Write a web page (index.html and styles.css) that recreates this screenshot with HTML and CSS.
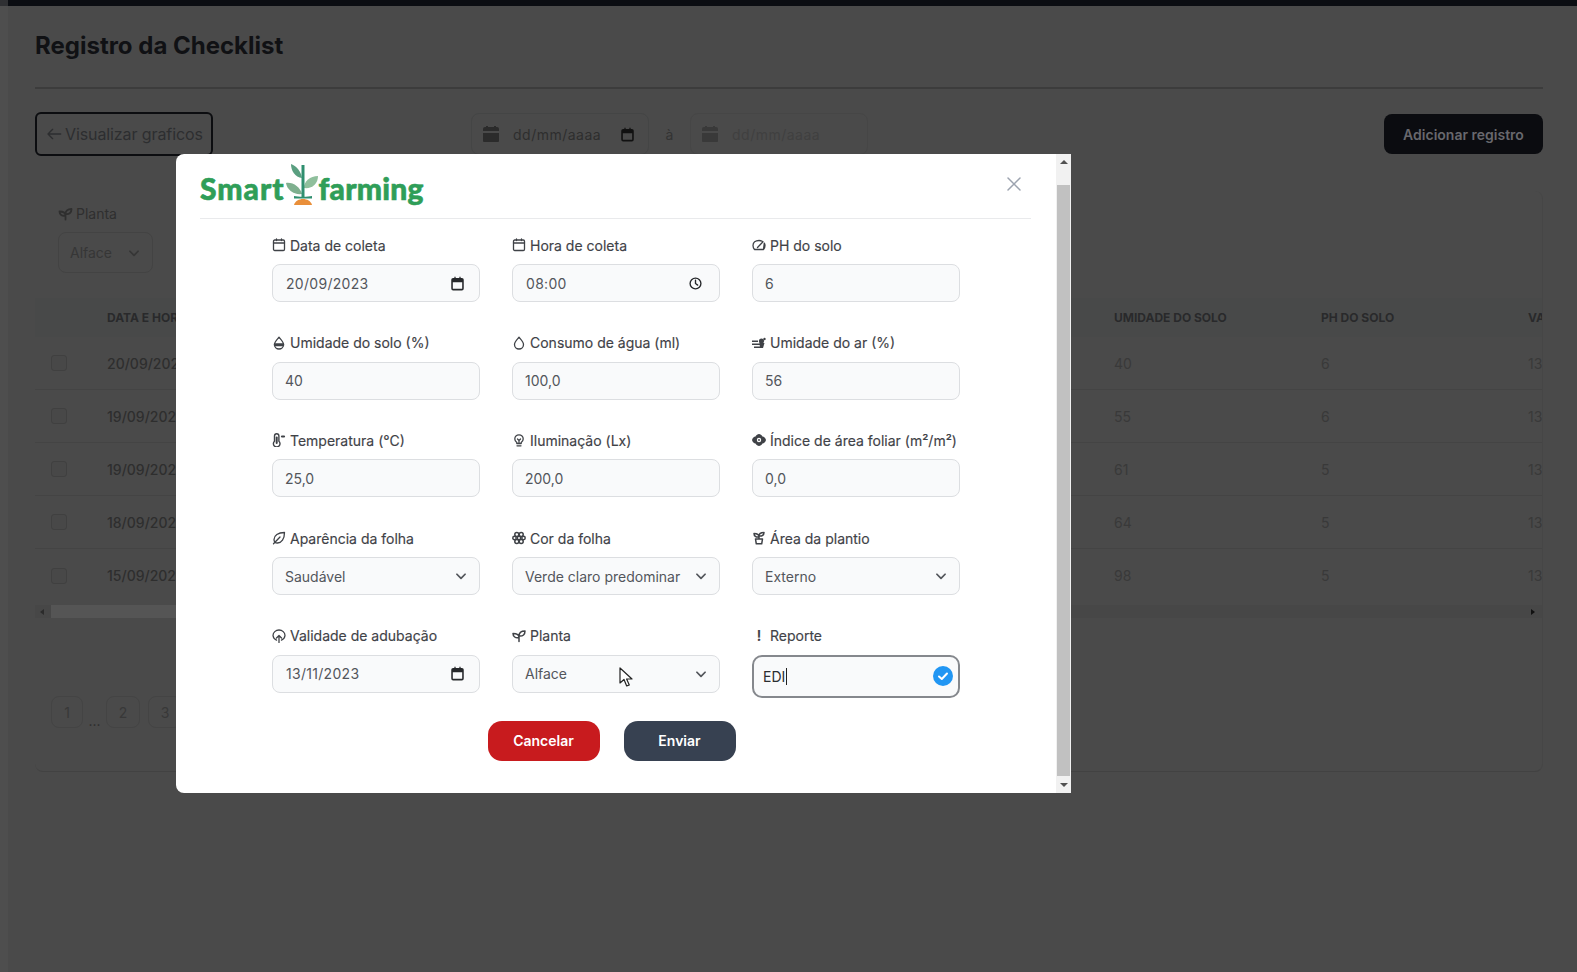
FILE: index.html
```html
<!DOCTYPE html>
<html lang="pt-BR">

<head>
    <meta charset="UTF-8">
    <meta name="viewport" content="width=device-width, initial-scale=1.0">
    <title>Registro da Checklist</title>
    <link rel="stylesheet" href="styles.css">
</head>

<body>
    <div class="rail"></div>

    <main class="page">
        <div class="topbar"></div>

        <h1 class="page-title">Registro da Checklist</h1>

        <div class="toolbar">
            <button class="btn-back" type="button">
                <svg width="16" height="16" viewBox="0 0 24 24" fill="none" stroke="currentColor" stroke-width="2" stroke-linecap="round" stroke-linejoin="round"><path d="M22 12H3M10 5l-7 7 7 7"/></svg>
                Visualizar graficos
            </button>

            <div class="date-range">
                <div class="date-box">
                    <svg class="date-cal" width="18" height="18" viewBox="0 0 18 18" fill="currentColor"><path d="M1 4a2 2 0 0 1 2-2h1V1h2v1h6V1h2v1h1a2 2 0 0 1 2 2v2H1zM1 8h16v8a1 1 0 0 1-1 1H2a1 1 0 0 1-1-1z"/></svg>
                    <span>dd/mm/aaaa</span>
                    <svg class="date-end" width="15" height="15" viewBox="0 0 24 24"><path fill-rule="evenodd" d="M5 3h2V1h2v2h6V1h2v2h2a3 3 0 0 1 3 3v14a3 3 0 0 1-3 3H5a3 3 0 0 1-3-3V6a3 3 0 0 1 3-3zm-.500 7v10a.5.5 0 0 0 .5.500h14a.5.5 0 0 0 .5-.5V10z"/></svg>
                </div>
                <span class="date-sep">à</span>
                <div class="date-box date-box-off">
                    <svg class="date-cal" width="18" height="18" viewBox="0 0 18 18" fill="currentColor"><path d="M1 4a2 2 0 0 1 2-2h1V1h2v1h6V1h2v1h1a2 2 0 0 1 2 2v2H1zM1 8h16v8a1 1 0 0 1-1 1H2a1 1 0 0 1-1-1z"/></svg>
                    <span>dd/mm/aaaa</span>
                </div>
            </div>

            <button class="btn-add" type="button">Adicionar registro</button>
        </div>

        <section class="card">
            <div class="filter">
                <div class="filter-label">
                    <svg width="15" height="14" viewBox="0 0 14 14" fill="none" stroke="currentColor" stroke-width="1.800" stroke-linecap="round" stroke-linejoin="round"><path d="M7 12.500V7M7 7c0-3 2-5 6-5 0 3.500-2 5.500-6 5zM7 8.500C7 6.500 5 4.500 1 4.500c0 3 2.500 5 6 4z"/></svg>
                    Planta
                </div>
                <div class="filter-select">
                    Alface
                    <svg width="14" height="14" viewBox="0 0 24 24" fill="none" stroke="currentColor" stroke-width="3" stroke-linecap="round" stroke-linejoin="round"><path d="M5 9l7 7 7-7"/></svg>
                </div>
            </div>

            <div class="table">
                <div class="row row-head">
                    <span></span>
                    <span>DATA E HORA</span>
                    <span>UMIDADE DO SOLO</span>
                    <span>PH DO SOLO</span>
                    <span>VALOR</span>
                </div>
                <div class="row">
                    <span class="check"></span>
                    <span class="cell-date">20/09/2023</span>
                    <span>40</span>
                    <span>6</span>
                    <span>13</span>
                </div>
                <div class="row">
                    <span class="check"></span>
                    <span class="cell-date">19/09/2023</span>
                    <span>55</span>
                    <span>6</span>
                    <span>13</span>
                </div>
                <div class="row">
                    <span class="check"></span>
                    <span class="cell-date">19/09/2023</span>
                    <span>61</span>
                    <span>5</span>
                    <span>13</span>
                </div>
                <div class="row">
                    <span class="check"></span>
                    <span class="cell-date">18/09/2023</span>
                    <span>64</span>
                    <span>5</span>
                    <span>13</span>
                </div>
                <div class="row row-last">
                    <span class="check"></span>
                    <span class="cell-date">15/09/2023</span>
                    <span>98</span>
                    <span>5</span>
                    <span>13</span>
                </div>
            </div>

            <div class="hscroll">
                <i class="arrow-left"></i>
                <div class="hscroll-thumb"></div>
                <i class="arrow-right"></i>
            </div>

            <div class="pager">
                <span class="page-btn page-btn-first">1</span>
                <span class="page-dots">...</span>
                <span class="page-btn">2</span>
                <span class="page-btn">3</span>
            </div>
        </section>
    </main>

    <div class="modal">
        <div class="modal-body">
            <header class="modal-head">
                <div class="logo">
                    <span class="logo-text">Smart</span>
                    <svg class="logo-plant" width="36" height="43" viewBox="0 0 36 43">
                        <path d="M17 31C15 24 8 19 1 20c1 7 8 12 16 11z" fill="#7fb08f"/>
                        <path d="M19 25c0-7 6-12 14-12 0 8-6 13-14 12z" fill="#8fbf9c"/>
                        <path d="M17 15C16 9 12 3 6 1c0 7 4 13 11 14z" fill="#5a9f80"/>
                        <path d="M16.500 2h3v32h-3z" fill="#2f8f6f"/>
                        <path d="M9 33c4 1 14 1 18 0v2.500H9z" fill="#2f8f6f"/>
                        <path d="M9 42c1-4 5-6 9-6s8 2 9 6z" fill="#e98f3a"/>
                    </svg>
                    <span class="logo-text logo-text-end">farming</span>
                </div>
                <svg class="modal-close" width="14" height="14" viewBox="0 0 14 14" fill="none" stroke="currentColor" stroke-width="1.500" stroke-linecap="round"><path d="M1 1l12 12M13 1L1 13"/></svg>
            </header>

            <form class="form-grid">
                <div class="form-item">
                    <label class="form-label">
                        <svg class="ico" viewBox="0 0 14 14"><rect x="1.500" y="2" width="11" height="10.500" rx="1.200"/><path d="M1.500 5h11M4.500 1v1.500M9.500 1v1.500"/></svg>
                        Data de coleta
                    </label>
                    <div class="field field-date">
                        <span>20/09/2023</span>
                        <svg class="ico-cal" viewBox="0 0 24 24"><path fill-rule="evenodd" d="M5 3h2V1h2v2h6V1h2v2h2a3 3 0 0 1 3 3v14a3 3 0 0 1-3 3H5a3 3 0 0 1-3-3V6a3 3 0 0 1 3-3zm-.500 7v10a.5.5 0 0 0 .5.500h14a.5.5 0 0 0 .5-.5V10z"/></svg>
                    </div>
                </div>
                <div class="form-item">
                    <label class="form-label">
                        <svg class="ico" viewBox="0 0 14 14"><rect x="1.500" y="2" width="11" height="10.500" rx="1.200"/><path d="M1.500 5h11M4.500 1v1.500M9.500 1v1.500"/></svg>
                        Hora de coleta
                    </label>
                    <div class="field field-date">
                        <span>08:00</span>
                        <svg class="ico-clock" viewBox="0 0 24 24"><circle cx="12" cy="12" r="10"/><path d="M12 6v6l4 3"/></svg>
                    </div>
                </div>
                <div class="form-item">
                    <label class="form-label">
                        <svg class="ico" viewBox="0 0 14 14"><path d="M2.500 11.500A6 6 0 0 1 1 7.500C1 4.500 3.500 2.500 7 2.500c1.200 0 2.300.3 3.200.8M12.300 5.200c.5.700.7 1.500.7 2.300 0 1.500-.5 3-1.500 4zM2.500 11.500h9M5.500 9.500L11 3.800"/></svg>
                        PH do solo
                    </label>
                    <div class="field"><span>6</span></div>
                </div>

                <div class="form-item">
                    <label class="form-label">
                        <svg class="ico" viewBox="0 0 14 14"><path d="M7 1.200C5 3.500 2.500 5.700 2.500 8.500a4.500 4.500 0 0 0 9 0C11.500 5.700 9 3.500 7 1.200z"/><path d="M2.500 8h9v1.500h-9z" fill="currentColor"/></svg>
                        Umidade do solo (%)
                    </label>
                    <div class="field"><span>40</span></div>
                </div>
                <div class="form-item">
                    <label class="form-label">
                        <svg class="ico" viewBox="0 0 14 14"><path d="M7 1.200C5 3.500 2.500 5.700 2.500 8.500a4.500 4.500 0 0 0 9 0C11.500 5.700 9 3.500 7 1.200z"/></svg>
                        Consumo de água (ml)
                    </label>
                    <div class="field"><span>100,0</span></div>
                </div>
                <div class="form-item">
                    <label class="form-label">
                        <svg class="ico ico-fill" viewBox="0 0 14 14"><path d="M0 4.500h6v1.500H0zM0 7.500h8V9H0zM2 10.500h6V12H2z"/><circle cx="9.500" cy="5" r="2.600"/><path d="M7.500 7h5l-1.500 5H8z"/><circle cx="12.500" cy="3" r="1.200"/></svg>
                        Umidade do ar (%)
                    </label>
                    <div class="field"><span>56</span></div>
                </div>

                <div class="form-item">
                    <label class="form-label">
                        <svg class="ico" viewBox="0 0 14 14"><path d="M2.500 3a2.200 2.200 0 0 1 4.400 0v5.200a3.300 3.300 0 1 1-4.400 0z" stroke-width="1.400"/><path d="M4.700 4.500v5.500" stroke-width="2"/><path d="M10 3.500h2" stroke-width="2.200"/></svg>
                        Temperatura (°C)
                    </label>
                    <div class="field"><span>25,0</span></div>
                </div>
                <div class="form-item">
                    <label class="form-label">
                        <svg class="ico" viewBox="0 0 14 14"><path d="M4.800 9.500C3.600 8.600 2.800 7.400 2.800 6a4.200 4.200 0 0 1 8.400 0c0 1.400-.8 2.600-2 3.500v1H4.800zM5 12.800h4M5.500 6L7 7.500 8.500 6M7 7.500v3"/></svg>
                        Iluminação (Lx)
                    </label>
                    <div class="field"><span>200,0</span></div>
                </div>
                <div class="form-item">
                    <label class="form-label">
                        <svg class="ico ico-fill" viewBox="0 0 14 14"><path d="M0 7c.6-2.200 2-3.400 3.500-3.500C4.200 2 5.800 1 7 1s2.800 1 3.500 2.500C12 3.600 13.400 4.800 14 7c-.6 2.200-2 3.400-3.500 3.500C9.800 12 8.200 13 7 13s-2.800-1-3.500-2.500C2 10.400.6 9.200 0 7z"/><circle cx="7" cy="7" r="2.200" fill="#fff"/><circle cx="7" cy="7" r=".9"/></svg>
                        Índice de área foliar (m²/m²)
                    </label>
                    <div class="field"><span>0,0</span></div>
                </div>

                <div class="form-item">
                    <label class="form-label">
                        <svg class="ico" viewBox="0 0 14 14"><path d="M12.500 1.500C6 1.500 2 4.500 2 8.500c0 2.200 1.500 3.500 3.500 3.500 4 0 7-4 7-10.500zM1.500 12.800L8 6"/></svg>
                        Aparência da folha
                    </label>
                    <div class="field field-select">
                        <span>Saudável</span>
                        <svg class="ico-chevron" viewBox="0 0 24 24"><path d="M5 9l7 7 7-7"/></svg>
                    </div>
                </div>
                <div class="form-item">
                    <label class="form-label">
                        <svg class="ico ico-thick" viewBox="0 0 14 14"><circle cx="7" cy="7" r="1.700"/><circle cx="4.800" cy="3.600" r="2"/><circle cx="9.200" cy="3.600" r="2"/><circle cx="4.800" cy="10.400" r="2"/><circle cx="9.200" cy="10.400" r="2"/><circle cx="2.500" cy="7" r="1.700"/><circle cx="11.500" cy="7" r="1.700"/></svg>
                        Cor da folha
                    </label>
                    <div class="field field-select">
                        <span>Verde claro predominar</span>
                        <svg class="ico-chevron" viewBox="0 0 24 24"><path d="M5 9l7 7 7-7"/></svg>
                    </div>
                </div>
                <div class="form-item">
                    <label class="form-label">
                        <svg class="ico ico-thick" viewBox="0 0 14 14"><path d="M3.500 8h7l-.8 4.800H4.300zM7 8V4.500M7 5C7 3 8.500 1.500 12 1.500 12 4 10 5.500 7 5zM7 6C7 4 5.500 2.500 2 2.500 2 5 4 6.500 7 6z"/></svg>
                        Área da plantio
                    </label>
                    <div class="field field-select">
                        <span>Externo</span>
                        <svg class="ico-chevron" viewBox="0 0 24 24"><path d="M5 9l7 7 7-7"/></svg>
                    </div>
                </div>

                <div class="form-item">
                    <label class="form-label">
                        <svg class="ico" viewBox="0 0 14 14"><path d="M4.500 11.200A5.800 5.800 0 0 1 1 6.500a6 5.500 0 0 1 12 0 5.800 5.800 0 0 1-3.500 4.700M7 13.500V6.500M4.500 9L7 6.500 9.500 9"/></svg>
                        Validade de adubação
                    </label>
                    <div class="field field-date">
                        <span>13/11/2023</span>
                        <svg class="ico-cal" viewBox="0 0 24 24"><path fill-rule="evenodd" d="M5 3h2V1h2v2h6V1h2v2h2a3 3 0 0 1 3 3v14a3 3 0 0 1-3 3H5a3 3 0 0 1-3-3V6a3 3 0 0 1 3-3zm-.500 7v10a.5.5 0 0 0 .5.500h14a.5.5 0 0 0 .5-.5V10z"/></svg>
                    </div>
                </div>
                <div class="form-item">
                    <label class="form-label">
                        <svg class="ico ico-thick" viewBox="0 0 14 14"><path d="M7 12.500V7M7 7c0-3 2-5 6-5 0 3.500-2 5.500-6 5zM7 8.500C7 6.500 5 4.500 1 4.500c0 3 2.500 5 6 4z"/></svg>
                        Planta
                    </label>
                    <div class="field field-select">
                        <span>Alface</span>
                        <svg class="ico-chevron" viewBox="0 0 24 24"><path d="M5 9l7 7 7-7"/></svg>
                    </div>
                </div>
                <div class="form-item">
                    <label class="form-label">
                        <span class="ico-bang">!</span>
                        Reporte
                    </label>
                    <div class="field field-focus">
                        <span>EDI</span><i class="caret"></i>
                        <svg class="ico-ok" viewBox="0 0 20 20"><circle cx="10" cy="10" r="10" fill="#2196f3"/><path d="M6 10.500l2.800 2.500L14 7.500" fill="none" stroke="#fff" stroke-width="2" stroke-linecap="round" stroke-linejoin="round"/></svg>
                    </div>
                </div>
            </form>

            <div class="form-actions">
                <button class="btn btn-cancel" type="button">Cancelar</button>
                <button class="btn btn-send" type="button">Enviar</button>
            </div>
        </div>

        <div class="vscroll">
            <i class="arrow-up"></i>
            <div class="vscroll-thumb"></div>
            <i class="arrow-down"></i>
        </div>
    </div>

    <svg class="mouse" width="14" height="21" viewBox="0 0 14 21"><path d="M1 1v15l4-3.500 2.700 6.500 2.600-1.100L7.600 12H13z" fill="#fff" stroke="#222" stroke-width="1.200" stroke-linejoin="round"/></svg>
</body>

</html>
```

FILE: styles.css
```css
* {
    box-sizing: border-box;
}

html,
body {
    height: 100%;
}

body {
    margin: 0;
    display: flex;
    overflow: hidden;
    font-family: Inter, "Liberation Sans", sans-serif;
    background-color: #4a4a4a;
    color: #2b2b2b;
}

button {
    font-family: inherit;
    cursor: pointer;
}

/* pagina escurecida atras do modal */
.rail {
    width: 8px;
    flex-shrink: 0;
    background-color: #4e4e4e;
    border-top: 6px solid #2f3033;
}

.page {
    flex: 1;
    min-width: 0;
    padding-right: 34px;
}

.topbar {
    height: 6px;
    margin-right: -34px;
    background-color: #0b0d12;
}

.page-title {
    margin: 0 0 0 27px;
    padding: 25px 0 26px;
    font-size: 24px;
    line-height: 30px;
    font-weight: 700;
    color: #101114;
    border-bottom: 2px solid #3c3c3c;
}

.toolbar {
    display: flex;
    align-items: center;
    margin: 23px 0 0 27px;
    height: 44px;
}

.btn-back {
    display: flex;
    align-items: center;
    gap: 3px;
    width: 178px;
    height: 44px;
    padding: 0 9px;
    font-size: 16px;
    letter-spacing: -0.1px;
    white-space: nowrap;
    color: #2d2e30;
    background: none;
    border: 2px solid #0c0d10;
    border-radius: 6px;
}

.btn-back svg {
    flex-shrink: 0;
}

.date-range {
    display: flex;
    align-items: center;
    margin-left: 258px;
}

.date-box {
    display: flex;
    align-items: center;
    width: 178px;
    height: 42px;
    padding: 0 13px 0 10px;
    font-size: 14px;
    letter-spacing: 0.5px;
    color: #2e2e2e;
    border: 1px solid #444545;
    border-radius: 8px;
}

.date-cal {
    margin-right: 13px;
    color: #2b2b2b;
}

.date-end {
    margin-left: auto;
    fill: #111;
}

.date-sep {
    width: 41px;
    text-align: center;
    font-size: 14px;
    color: #333;
}

.date-box-off {
    color: #404040;
    border-color: #464646;
}

.date-box-off .date-cal {
    color: #393939;
}

.btn-add {
    margin-left: auto;
    width: 159px;
    height: 40px;
    font-size: 14px;
    font-weight: 600;
    color: #68686d;
    background-color: #0b0c10;
    border: none;
    border-radius: 8px;
}

.card {
    margin: 35px 0 0 27px;
    height: 581px;
    border-right: 1px solid #464646;
    border-bottom: 1px solid #424242;
    border-radius: 8px;
}

.filter {
    padding: 14px 0 0 23px;
    height: 107px;
}

.filter-label {
    display: flex;
    align-items: center;
    gap: 3px;
    font-size: 14px;
    line-height: 18px;
    color: #2f2f2f;
}

.filter-select {
    display: flex;
    align-items: center;
    justify-content: space-between;
    width: 95px;
    height: 41px;
    margin-top: 9px;
    padding: 0 11px;
    font-size: 14px;
    color: #363636;
    border: 1px solid #434343;
    border-radius: 8px;
}

.table {
    overflow: hidden;
}

.row {
    display: grid;
    grid-template-columns: 72px 1007px 207px 207px 60px;
    align-items: center;
    height: 53px;
    font-size: 14px;
    color: #393939;
    border-bottom: 1px solid #444444;
}

.row > span {
    white-space: nowrap;
}

.row-head {
    height: 39px;
    font-size: 12px;
    font-weight: 700;
    color: #29292b;
    background-color: #484949;
    border-bottom: none;
}

.row-last {
    border-bottom: none;
}

.check {
    width: 16px;
    height: 16px;
    margin-left: 16px;
    border: 1px solid #404040;
    border-radius: 3px;
    background-color: #484848;
}

.cell-date {
    font-weight: 500;
    color: #2e2e2e;
}

.hscroll {
    display: flex;
    align-items: center;
    height: 13px;
    margin-top: 3px;
    background-color: #474747;
}

.hscroll-thumb {
    width: 500px;
    height: 13px;
    margin-left: 7px;
    background-color: #555555;
}

.arrow-left,
.arrow-right {
    width: 0;
    height: 0;
    border-top: 3px solid transparent;
    border-bottom: 3px solid transparent;
}

.arrow-left {
    margin-left: 5px;
    border-right: 4px solid #2b2b2b;
}

.arrow-right {
    margin-left: auto;
    margin-right: 7px;
    border-left: 4px solid #111;
}

.pager {
    display: flex;
    align-items: flex-end;
    margin: 78px 0 0 16px;
}

.page-btn {
    display: flex;
    align-items: center;
    justify-content: center;
    width: 34px;
    height: 32px;
    margin-right: 8px;
    font-size: 14px;
    color: #383838;
    border: 1px solid #444444;
    border-radius: 8px;
}

.page-btn-first {
    width: 32px;
    margin-right: 0;
}

.page-dots {
    width: 23px;
    text-align: center;
    font-size: 14px;
    line-height: 14px;
    color: #2c2c2c;
}

/* modal */
.modal {
    position: absolute;
    left: 176px;
    top: 154px;
    display: flex;
    width: 895px;
    height: 639px;
    background-color: #fff;
    border-radius: 8px 0 0 8px;
}

.modal-body {
    flex: 1;
    min-width: 0;
    padding: 0 25px 0 24px;
}

.modal-head {
    display: flex;
    align-items: flex-start;
    justify-content: space-between;
    height: 65px;
    padding-top: 9px;
    border-bottom: 1px solid #e9eaec;
}

.logo {
    display: flex;
    align-items: flex-end;
    height: 43px;
}

.logo-text {
    padding-bottom: 1px;
    font-family: Lato, "Noto Sans", sans-serif;
    font-size: 30px;
    line-height: 34px;
    font-weight: 900;
    color: #2f9e58;
    letter-spacing: 1px;
    -webkit-text-stroke: 0.6px #2f9e58;
}

.logo-text-end {
    letter-spacing: 0.2px;
}

.logo-plant {
    margin-right: -2px;
}

.modal-close {
    margin: 14px 10px 0 0;
    color: #9ca3af;
}

.form-grid {
    display: grid;
    grid-template-columns: repeat(3, 208px);
    column-gap: 32px;
    row-gap: 30.7px;
    margin: 16px 0 0 72px;
}

.form-item {
    display: flex;
    flex-direction: column;
    gap: 9px;
}

.form-label {
    display: flex;
    align-items: center;
    gap: 4px;
    height: 20px;
    font-size: 14px;
    font-weight: 400;
    color: #3f4247;
    -webkit-text-stroke: 0.15px #3f4247;
}

.ico {
    width: 14px;
    height: 14px;
    fill: none;
    stroke: #3f4247;
    stroke-width: 1.300;
    stroke-linecap: round;
    stroke-linejoin: round;
    flex-shrink: 0;
}

.ico-thick {
    stroke-width: 1.500;
}

.ico-fill {
    fill: #3f4247;
    stroke: none;
}

.ico-bang {
    width: 14px;
    text-align: center;
    font-weight: 600;
    color: #3f4247;
}

.field {
    display: flex;
    align-items: center;
    justify-content: space-between;
    height: 38px;
    padding: 0 11px 0 12px;
    font-size: 14px;
    color: #53565b;
    background-color: #f9fafb;
    border: 1px solid #dcdee1;
    border-radius: 8px;
}

.field-date span {
    padding-left: 1px;
    letter-spacing: 0.3px;
}

.ico-cal {
    width: 15px;
    height: 15px;
    fill: #26282b;
    flex-shrink: 0;
}

.ico-clock,
.ico-chevron {
    width: 14px;
    height: 14px;
    fill: none;
    stroke: #26282b;
    stroke-width: 2.500;
    flex-shrink: 0;
}

.ico-clock {
    width: 13px;
    height: 13px;
    margin-right: 6px;
    stroke-linecap: round;
}

.field-date .ico-cal {
    margin-right: 3px;
}

.ico-chevron {
    stroke: #53565b;
    stroke-width: 3;
    stroke-linecap: round;
    stroke-linejoin: round;
}

.field-focus {
    justify-content: flex-start;
    height: 43px;
    padding: 0 5px 0 9px;
    color: #2b2d30;
    border: 2px solid #85888d;
    border-radius: 10px;
}

.caret {
    width: 1px;
    height: 17px;
    margin-left: 1px;
    background-color: #222;
}

.ico-ok {
    width: 20px;
    height: 20px;
    margin-left: auto;
}

.form-actions {
    display: flex;
    justify-content: center;
    gap: 24px;
    margin: 23px 0 0 -8px;
}

.btn {
    width: 112px;
    height: 40px;
    font-size: 14px;
    font-weight: 600;
    color: #fff;
    border: none;
    border-radius: 14px;
}

.btn-cancel {
    background-color: #c81b1e;
}

.btn-send {
    background-color: #374151;
}

.vscroll {
    display: flex;
    flex-direction: column;
    align-items: center;
    width: 15px;
    background-color: #f1f1f1;
}

.vscroll-thumb {
    width: 13px;
    height: 591px;
    margin: 21px 0 3px;
    background-color: #c1c1c1;
}

.arrow-up,
.arrow-down {
    width: 0;
    height: 0;
    border-left: 4px solid transparent;
    border-right: 4px solid transparent;
}

.arrow-up {
    margin-top: 6px;
    border-bottom: 4px solid #505050;
}

.arrow-down {
    margin-top: 4px;
    border-top: 4px solid #505050;
}

.mouse {
    position: absolute;
    left: 619px;
    top: 667px;
}
```
